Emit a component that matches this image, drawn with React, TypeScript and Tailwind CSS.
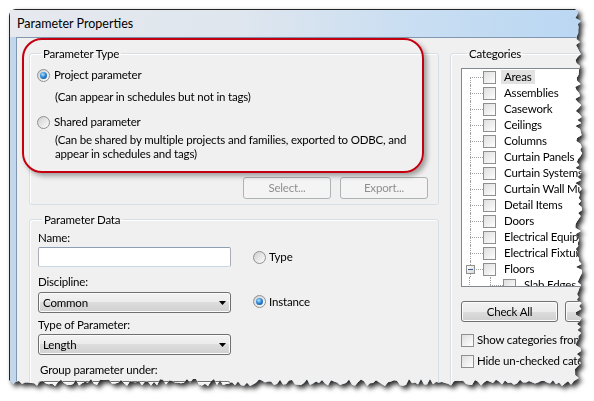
import React from 'react';

const CATEGORIES = [
  'Areas',
  'Assemblies',
  'Casework',
  'Ceilings',
  'Columns',
  'Curtain Panels',
  'Curtain Systems',
  'Curtain Wall Mullions',
  'Detail Items',
  'Doors',
  'Electrical Equipment',
  'Electrical Fixtures',
];

// ragged "torn paper" outline for the right and bottom edges of the screenshot
function tornEdge(w: number, h: number) {
  let seed = 11;
  const rnd = () => {
    seed = (seed * 16807) % 2147483647;
    return (seed - 1) / 2147483646;
  };
  const pts: string[] = ['0px 0px'];
  for (let y = 0; y <= h - 9; y += 3) pts.push(`${(w - 8 + rnd() * 7).toFixed(1)}px ${y}px`);
  for (let x = w - 9; x >= 0; x -= 3) pts.push(`${x}px ${(h - 8 + rnd() * 7).toFixed(1)}px`);
  pts.push(`0px ${h - 6}px`);
  return `polygon(${pts.join(',')})`;
}

function Radio({ checked }: { checked?: boolean }) {
  return (
    <span className="w-[13px] h-[13px] rounded-full border border-[#8e8f8f] bg-[linear-gradient(135deg,#cfcfcf,#fdfdfd)] flex items-center justify-center shrink-0">
      {checked && (
        <span className="w-[7px] h-[7px] rounded-full bg-[radial-gradient(circle_at_40%_35%,#b5e3ff_0%,#2f8ad6_45%,#0c3f86_100%)]" />
      )}
    </span>
  );
}

function Check() {
  return <span className="w-[13px] h-[13px] border border-[#8e8f8f] bg-[linear-gradient(135deg,#dedede,#ffffff)] shrink-0" />;
}

function Combo({ value }: { value: string }) {
  return (
    <div className="w-[193px] h-[21px] rounded-[3px] border border-[#707070] bg-[linear-gradient(#f3f3f3_0%,#ebebeb_50%,#dddddd_50%,#d0d0d0_100%)] shadow-[inset_0_0_0_1px_#fbfbfb] flex items-center pl-[4px] pr-[4px]">
      <span className="flex-1">{value}</span>
      <svg width="7" height="4" viewBox="0 0 7 4">
        <path d="M0 0h7L3.5 4z" fill="#000" />
      </svg>
    </div>
  );
}

function Button({ label, disabled, w }: { label: string; disabled?: boolean; w: string }) {
  return (
    <div
      className={
        disabled
          ? `${w} h-[22px] rounded-[3px] border border-[#adb2b5] bg-[#f4f4f4] text-[#8f8f8f] flex items-center justify-center`
          : `${w} h-[21px] rounded-[3px] border border-[#707070] bg-[linear-gradient(#f2f2f2_0%,#ebebeb_50%,#dddddd_50%,#cfcfcf_100%)] shadow-[inset_0_0_0_1px_#fcfcfc] flex items-center justify-center`
      }
    >
      {label}
    </div>
  );
}

function TreeRow({ label, first, highlight }: { label: string; first?: boolean; highlight?: boolean }) {
  return (
    <div className="h-4 flex items-center shrink-0">
      <div className="w-[8px]" />
      <div className="w-[13px] h-4 flex flex-col">
        <div className={first ? 'h-2' : 'h-2 border-l border-dotted border-[#a0a0a0]'} />
        <div className="h-2 border-l border-t border-dotted border-[#a0a0a0]" />
      </div>
      <Check />
      <span className={highlight ? 'ml-[5px] px-[3px] bg-[#e2e2e2] whitespace-nowrap' : 'ml-[8px] whitespace-nowrap'}>{label}</span>
    </div>
  );
}

export default function App() {
  return (
    <div className="w-[594px] h-[401px] bg-white overflow-hidden text-[11.5px] leading-[14px] tracking-[-0.18px] text-black font-['Segoe_UI',Lato,sans-serif]">
      <div className="pl-[9px] pt-[9px] [filter:drop-shadow(3px_3px_2.5px_rgba(0,0,0,0.85))]">
        <div
          className="relative w-[574px] h-[378px] rounded-t-[7px] border border-[#262626] bg-[#c3d7ec] flex flex-col"
          style={{ clipPath: tornEdge(574, 378) }}
        >
          {/* title bar */}
          <div className="h-[27px] shrink-0 flex items-center pl-[7px] text-[12.5px] tracking-normal bg-[linear-gradient(90deg,#e6e9ee_0%,#dfe6ee_40%,#c9def2_70%,#bad7f3_100%)]">
            Parameter Properties
          </div>

          {/* client area */}
          <div className="ml-[6px] flex-1 border-l border-t border-[#8196b0] bg-[#f0f0f0] flex overflow-hidden">
            <div className="ml-[12px] w-[410px] shrink-0 flex flex-col">
              <fieldset className="mt-[8px] border border-[#d5dfe5] rounded-[3px] shadow-[inset_1px_1px_0_#ffffff] pl-[7px] pr-[10px] pb-[5px]">
                <legend className="ml-[4px] px-[2px] leading-[15px]">Parameter Type</legend>
                <div className="mt-[6px] h-4 flex items-center gap-[4px]">
                  <Radio checked />
                  <span>Project parameter</span>
                </div>
                <div className="mt-[6px] h-4 pl-[18px] flex items-center whitespace-nowrap">(Can appear in schedules but not in tags)</div>
                <div className="mt-[9px] h-4 flex items-center gap-[4px]">
                  <Radio />
                  <span>Shared parameter</span>
                </div>
                <div className="mt-[3px] pl-[18px] whitespace-nowrap">
                  (Can be shared by multiple projects and families, exported to ODBC, and
                  <br />
                  appear in schedules and tags)
                </div>
                <div className="mt-[16px] flex justify-end gap-[9px]">
                  <Button label="Select..." disabled w="w-[88px]" />
                  <Button label="Export..." disabled w="w-[88px]" />
                </div>
              </fieldset>

              <fieldset className="mt-[7px] border border-[#d5dfe5] rounded-[3px] shadow-[inset_1px_1px_0_#ffffff] pl-[8px] h-[200px]">
                <legend className="ml-[4px] px-[2px] leading-[15px]">Parameter Data</legend>
                <div className="mt-[4px]">Name:</div>
                <div className="mt-[2px] flex items-center">
                  <div className="w-[193px] h-[20px] border border-[#abadb3] border-t-[#8e9fb4] border-b-[#c9d6e3] bg-white rounded-[2px]" />
                  <div className="ml-[22px] flex items-center gap-[3px]">
                    <Radio />
                    <span>Type</span>
                  </div>
                </div>
                <div className="mt-[8px]">Discipline:</div>
                <div className="mt-[3px] flex items-center">
                  <Combo value="Common" />
                  <div className="ml-[22px] -mt-[2px] flex items-center gap-[3px]">
                    <Radio checked />
                    <span>Instance</span>
                  </div>
                </div>
                <div className="mt-[5px]">Type of Parameter:</div>
                <div className="mt-[2px]">
                  <Combo value="Length" />
                </div>
                <div className="mt-[8px] pl-[2px]">Group parameter under:</div>
                <div className="mt-[4px]">
                  <Combo value="Dimensions" />
                </div>
              </fieldset>
            </div>

            <div className="ml-[11px] w-[190px] shrink-0 flex flex-col">
              <fieldset className="mt-[8px] border border-[#d5dfe5] rounded-[3px] shadow-[inset_1px_1px_0_#ffffff] pl-[10px] h-[400px]">
                <legend className="ml-[6px] px-[2px] leading-[15px]">Categories</legend>
                <div className="mt-[7px] w-[170px] h-[219px] border border-[#828790] bg-white overflow-hidden flex flex-col">
                  {CATEGORIES.map((c, i) => (
                    <TreeRow key={c} label={c} first={i === 0} highlight={i === 0} />
                  ))}
                  {/* Floors, expanded */}
                  <div className="h-4 flex items-center shrink-0">
                    <div className="w-[8px]" />
                    <div className="relative w-[13px] h-4 flex flex-col">
                      <div className="h-2 border-l border-dotted border-[#a0a0a0]" />
                      <div className="h-2 border-l border-t border-dotted border-[#a0a0a0]" />
                      <div className="absolute left-[-4px] top-[4px] w-[9px] h-[9px] border border-[#919191] bg-[linear-gradient(135deg,#ffffff,#d8d8d8)] flex items-center justify-center">
                        <div className="w-[5px] h-px bg-[#3a5f8f]" />
                      </div>
                    </div>
                    <Check />
                    <span className="ml-[8px]">Floors</span>
                  </div>
                  <div className="h-4 flex items-center shrink-0">
                    <div className="w-[8px] h-4 border-r border-dotted border-[#a0a0a0]" />
                    <div className="w-[20px]" />
                    <div className="w-[13px] h-4 flex flex-col">
                      <div className="h-2 border-l border-dotted border-[#a0a0a0]" />
                      <div className="h-2 border-l border-t border-dotted border-[#a0a0a0]" />
                    </div>
                    <Check />
                    <span className="ml-[8px]">Slab Edges</span>
                  </div>
                </div>
                <div className="mt-[14px] flex gap-[7px]">
                  <Button label="Check All" w="w-[97px]" />
                  <Button label="Check None" w="w-[97px]" />
                </div>
                <div className="mt-[11px] flex items-center gap-[3px]">
                  <Check />
                  <span className="whitespace-nowrap">Show categories from all disciplines</span>
                </div>
                <div className="mt-[7px] flex items-center gap-[3px]">
                  <Check />
                  <span className="whitespace-nowrap">Hide un-checked categories</span>
                </div>
              </fieldset>
            </div>
          </div>

          {/* red callout drawn over the Parameter Type group */}
          <div className="absolute left-[12px] top-[28px] w-[402px] h-[135px] rounded-[20px] border-2 border-[#c40010] shadow-[3px_3px_5px_rgba(0,0,0,0.35)]" />
        </div>
      </div>
    </div>
  );
}
